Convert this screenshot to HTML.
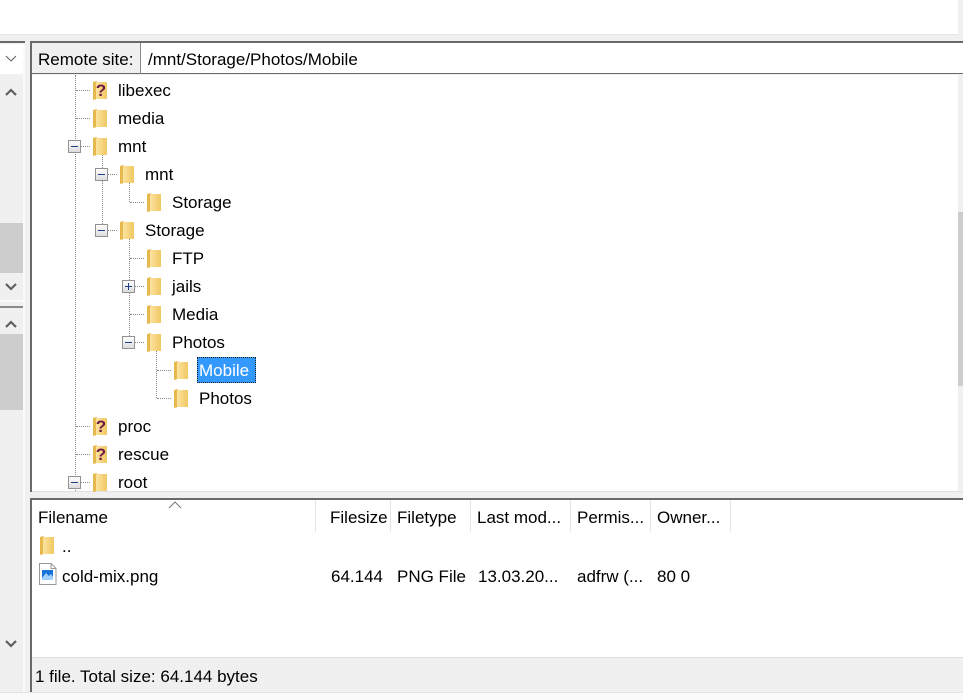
<!DOCTYPE html>
<html><head><meta charset="utf-8"><style>
*{margin:0;padding:0;box-sizing:border-box}
body{width:963px;height:700px;position:relative;background:#f0f0f0;font-family:"Segoe UI","Liberation Sans",sans-serif;font-size:17px;color:#000;overflow:hidden}
.a{position:absolute}
.t{position:absolute;white-space:nowrap;line-height:20px;margin-top:1px}
.vl{position:absolute;border-left:1px dotted #888;width:0}
.hl{position:absolute;border-top:1px dotted #888;height:0}
.box{position:absolute;width:13px;height:13px;border:1px solid #929292;background:linear-gradient(#fff,#dcdcdc)}
.box:before{content:"";position:absolute;left:2px;top:5px;width:7px;height:1px;background:#1d3f8a}
.box.p:after{content:"";position:absolute;left:5px;top:2px;width:1px;height:7px;background:#1d3f8a}
.fold{position:absolute;width:14px;height:19px}
</style></head><body>
<div class="a" style="left:0;top:0;width:963px;height:35px;background:#fff;border-bottom:1px solid #e3e3e3"></div>
<div class="a" style="left:958px;top:0;width:5px;height:35px;background:#f0f0f0"></div>
<div class="a" style="left:0;top:41px;width:25px;height:2px;background:#6a6a6a"></div>
<div class="a" style="left:0;top:44px;width:24px;height:30px;background:#fff"></div>
<svg class="a" style="left:0;top:0" width="25" height="700">
<path d="M6 56 l5 5 l5 -5" fill="none" stroke="#606060" stroke-width="1"/>
<path d="M6 95 l5 -5 l5 5" fill="none" stroke="#606060" stroke-width="2.2"/>
<path d="M6 284 l5 5 l5 -5" fill="none" stroke="#606060" stroke-width="2.2"/>
<path d="M6 327 l5 -5 l5 5" fill="none" stroke="#606060" stroke-width="2.2"/>
<path d="M6 641 l5 5 l5 -5" fill="none" stroke="#606060" stroke-width="2.2"/>
</svg>
<div class="a" style="left:0;top:223px;width:23px;height:50px;background:#cdcdcd"></div>
<div class="a" style="left:0;top:300px;width:25px;height:2px;background:#fafafa"></div>
<div class="a" style="left:0;top:306px;width:25px;height:2px;background:#8a8a8a"></div>
<div class="a" style="left:0;top:334px;width:23px;height:76px;background:#cdcdcd"></div>
<div class="a" style="left:23px;top:43px;width:2px;height:650px;background:#fafafa"></div>
<div class="a" style="left:30px;top:41px;width:933px;height:2px;background:#6a6a6a"></div>
<div class="a" style="left:30px;top:41px;width:2px;height:451px;background:#6a6a6a"></div>
<div class="a" style="left:32px;top:43px;width:931px;height:31px;background:#fff;border-bottom:1px solid #6a6a6a"></div>
<div class="a" style="left:32px;top:43px;width:109px;height:31px;background:#f0f0f0;border-right:1px solid #8a8a8a;border-bottom:1px solid #6a6a6a"></div>
<div class="t" style="left:38px;top:49px">Remote site:</div>
<div class="t" style="left:148px;top:49px">/mnt/Storage/Photos/Mobile</div>
<div class="a" style="left:32px;top:75px;width:927px;height:416px;background:#fff"></div>
<div class="a" style="left:958px;top:75px;width:5px;height:416px;background:#f0f0f0"></div>
<div class="a" style="left:958px;top:212px;width:5px;height:174px;background:#cdcdcd"></div>
<div class="a" style="left:32px;top:491px;width:931px;height:8px;background:#f0f0f0;border-top:1px solid #e0e0e0"></div>

<div class="vl" style="left:75px;top:75px;height:416px"></div>
<div class="vl" style="left:102px;top:154px;height:76px"></div>
<div class="vl" style="left:129px;top:182px;height:20px"></div>
<div class="vl" style="left:129px;top:238px;height:104px"></div>
<div class="vl" style="left:156px;top:350px;height:48px"></div>

<svg width="0" height="0" style="position:absolute"><defs>
<linearGradient id="fg" x1="0" x2="1"><stop offset="0" stop-color="#fae3a0"/><stop offset="1" stop-color="#f0c862"/></linearGradient>
<g id="fo"><path d="M0 1 L4 0 L4 18 L0 19 Z" fill="#e6b84e"/><rect x="3" y="1" width="11" height="17" fill="url(#fg)"/></g>
<g id="fq"><use href="#fo"/><text x="8" y="15" font-size="17" font-weight="bold" fill="#6e1a44" text-anchor="middle" font-family="Liberation Sans">?</text></g>
</defs></svg>

<div class="hl" style="left:76px;top:90px;width:14px"></div>
<svg class="fold" style="left:93px;top:81px" viewBox="0 0 14 19"><use href="#fq"/></svg>
<div class="t" style="left:118px;top:80px">libexec</div>

<div class="hl" style="left:76px;top:118px;width:14px"></div>
<svg class="fold" style="left:93px;top:109px" viewBox="0 0 14 19"><use href="#fo"/></svg>
<div class="t" style="left:118px;top:108px">media</div>

<div class="hl" style="left:76px;top:146px;width:14px"></div>
<div class="box" style="left:68px;top:140px"></div>
<svg class="fold" style="left:93px;top:137px" viewBox="0 0 14 19"><use href="#fo"/></svg>
<div class="t" style="left:118px;top:136px">mnt</div>

<div class="hl" style="left:103px;top:174px;width:14px"></div>
<div class="box" style="left:95px;top:168px"></div>
<svg class="fold" style="left:120px;top:165px" viewBox="0 0 14 19"><use href="#fo"/></svg>
<div class="t" style="left:145px;top:164px">mnt</div>

<div class="hl" style="left:130px;top:202px;width:14px"></div>
<svg class="fold" style="left:147px;top:193px" viewBox="0 0 14 19"><use href="#fo"/></svg>
<div class="t" style="left:172px;top:192px">Storage</div>

<div class="hl" style="left:103px;top:230px;width:14px"></div>
<div class="box" style="left:95px;top:224px"></div>
<svg class="fold" style="left:120px;top:221px" viewBox="0 0 14 19"><use href="#fo"/></svg>
<div class="t" style="left:145px;top:220px">Storage</div>

<div class="hl" style="left:130px;top:258px;width:14px"></div>
<svg class="fold" style="left:147px;top:249px" viewBox="0 0 14 19"><use href="#fo"/></svg>
<div class="t" style="left:172px;top:248px">FTP</div>

<div class="hl" style="left:130px;top:286px;width:14px"></div>
<div class="box p" style="left:122px;top:280px"></div>
<svg class="fold" style="left:147px;top:277px" viewBox="0 0 14 19"><use href="#fo"/></svg>
<div class="t" style="left:172px;top:276px">jails</div>

<div class="hl" style="left:130px;top:314px;width:14px"></div>
<svg class="fold" style="left:147px;top:305px" viewBox="0 0 14 19"><use href="#fo"/></svg>
<div class="t" style="left:172px;top:304px">Media</div>

<div class="hl" style="left:130px;top:342px;width:14px"></div>
<div class="box" style="left:122px;top:336px"></div>
<svg class="fold" style="left:147px;top:333px" viewBox="0 0 14 19"><use href="#fo"/></svg>
<div class="t" style="left:172px;top:332px">Photos</div>

<div class="hl" style="left:157px;top:370px;width:14px"></div>
<svg class="fold" style="left:174px;top:361px" viewBox="0 0 14 19"><use href="#fo"/></svg>
<div class="a" style="left:197px;top:357px;width:59px;height:26px;background:#3399ff;border:1px dotted #222"></div>
<div class="t" style="left:199px;top:360px;color:#fff">Mobile</div>

<div class="hl" style="left:157px;top:398px;width:14px"></div>
<svg class="fold" style="left:174px;top:389px" viewBox="0 0 14 19"><use href="#fo"/></svg>
<div class="t" style="left:199px;top:388px">Photos</div>

<div class="hl" style="left:76px;top:426px;width:14px"></div>
<svg class="fold" style="left:93px;top:417px" viewBox="0 0 14 19"><use href="#fq"/></svg>
<div class="t" style="left:118px;top:416px">proc</div>

<div class="hl" style="left:76px;top:454px;width:14px"></div>
<svg class="fold" style="left:93px;top:445px" viewBox="0 0 14 19"><use href="#fq"/></svg>
<div class="t" style="left:118px;top:444px">rescue</div>

<div class="hl" style="left:76px;top:482px;width:14px"></div>
<div class="box" style="left:68px;top:476px"></div>
<svg class="fold" style="left:93px;top:473px" viewBox="0 0 14 19"><use href="#fo"/></svg>
<div class="t" style="left:118px;top:472px">root</div>

<div class="a" style="left:30px;top:498px;width:933px;height:2px;background:#6a6a6a"></div>
<div class="a" style="left:30px;top:498px;width:2px;height:195px;background:#6a6a6a"></div>
<div class="a" style="left:32px;top:500px;width:931px;height:157px;background:#fff"></div>
<svg class="a" style="left:168px;top:500px" width="14" height="10"><path d="M1 8 L7 2 L13 8" fill="none" stroke="#777" stroke-width="1"/></svg>
<div class="a" style="left:315px;top:500px;width:1px;height:32px;background:#e5e5e5"></div>
<div class="a" style="left:390px;top:500px;width:1px;height:32px;background:#e5e5e5"></div>
<div class="a" style="left:470px;top:500px;width:1px;height:32px;background:#e5e5e5"></div>
<div class="a" style="left:570px;top:500px;width:1px;height:32px;background:#e5e5e5"></div>
<div class="a" style="left:650px;top:500px;width:1px;height:32px;background:#e5e5e5"></div>
<div class="a" style="left:730px;top:500px;width:1px;height:32px;background:#e5e5e5"></div>
<div class="t" style="left:38px;top:507px">Filename</div>
<div class="t" style="left:330px;top:507px">Filesize</div>
<div class="t" style="left:397px;top:507px">Filetype</div>
<div class="t" style="left:477px;top:507px">Last mod...</div>
<div class="t" style="left:577px;top:507px">Permis...</div>
<div class="t" style="left:657px;top:507px">Owner...</div>

<svg class="fold" style="left:40px;top:536px" viewBox="0 0 14 19"><use href="#fo"/></svg>
<div class="t" style="left:62px;top:536px">..</div>

<svg class="a" style="left:39px;top:563px" width="18" height="22"><path d="M0.5 0.5 H12 L17 5.5 V21.5 H0.5 Z" fill="#fff" stroke="#999"/><path d="M12 0.5 V5.5 H17" fill="none" stroke="#999"/><rect x="3" y="7" width="11" height="10" fill="#1a73d9"/><path d="M3 15 L7 10 L10 13 L12 11 L14 14 V17 H3Z" fill="#9fd0ff"/></svg>
<div class="t" style="left:62px;top:566px">cold-mix.png</div>
<div class="t" style="left:331px;top:566px">64.144</div>
<div class="t" style="left:397px;top:566px">PNG File</div>
<div class="t" style="left:478px;top:566px">13.03.20...</div>
<div class="t" style="left:577px;top:566px">adfrw (...</div>
<div class="t" style="left:657px;top:566px">80 0</div>

<div class="a" style="left:32px;top:657px;width:931px;height:1px;background:#dcdcdc"></div>
<div class="t" style="left:35px;top:666px">1 file. Total size: 64.144 bytes</div>
<div class="a" style="left:0;top:692px;width:963px;height:8px;background:#fafafa;border-top:1px solid #e3e3e3"></div>
</body></html>
